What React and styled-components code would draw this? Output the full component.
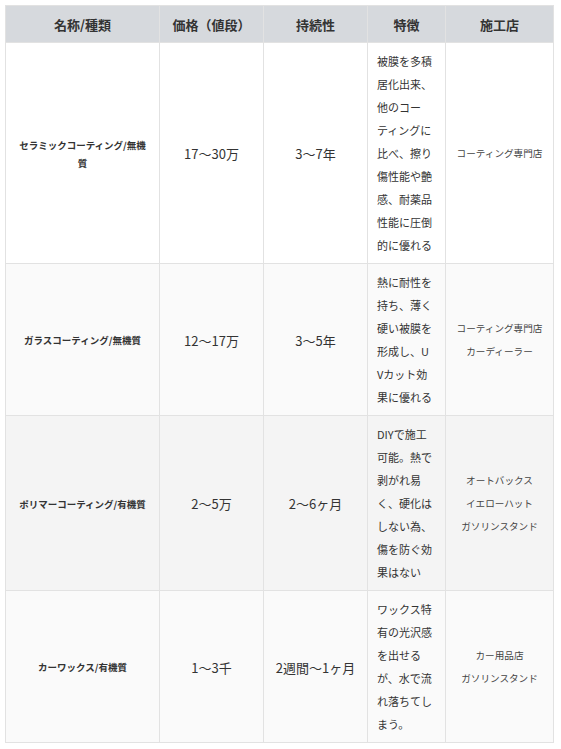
import styled, { createGlobalStyle } from "styled-components";

const GlobalStyle = createGlobalStyle`
  body {
    margin: 0;
    background: #ffffff;
    font-family: "Noto Sans CJK JP", "Noto Sans", sans-serif;
    color: #333333;
  }
`;

const Wrapper = styled.div`
  padding: 5px;
`;

const Table = styled.table`
  width: 548px;
  border-collapse: collapse;
  table-layout: fixed;
  border: 1px solid #e2e2e2;
`;

const Head = styled.th`
  background-color: #d6d9dd;
  border: 1px solid #e2e2e2;
  font-size: 13px;
  font-weight: bold;
  line-height: 23px;
  padding: 7px 8px 6px;
  text-align: center;
  color: #333333;
`;

const Row = styled.tr`
  background-color: ${(p) => p.$bg};
`;

const Cell = styled.td`
  border: 1px solid #e2e2e2;
  padding: 7px 10px 6px;
  vertical-align: middle;
  text-align: center;
  font-size: 13px;
  line-height: 23px;
  color: #333333;
`;

const NameCell = styled(Cell)`
  font-size: 9.5px;
  font-weight: bold;
  line-height: 18px;
  padding: 7px 11px 6px;
  line-break: strict;
`;

const FeatureCell = styled(Cell)`
  font-size: 11px;
  text-align: left;
  padding: 7px 9px 6px;
`;

const Line = styled.div`
  white-space: nowrap;
`;

const ShopCell = styled(Cell)`
  font-size: 9.6px;
  padding: 7px 6px 6px;
  color: #444444;
`;

const rows = [
  {
    name: "セラミックコーティング/無機質",
    price: "17〜30万",
    life: "3〜7年",
    feature: [
      "被膜を多積",
      "居化出来、",
      "他のコー",
      "ティングに",
      "比べ、擦り",
      "傷性能や艶",
      "感、耐薬品",
      "性能に圧倒",
      "的に優れる",
    ],
    shops: ["コーティング専門店"],
    bg: "#ffffff",
  },
  {
    name: "ガラスコーティング/無機質",
    price: "12〜17万",
    life: "3〜5年",
    feature: ["熱に耐性を", "持ち、薄く", "硬い被膜を", "形成し、U", "Vカット効", "果に優れる"],
    shops: ["コーティング専門店", "カーディーラー"],
    bg: "#fafafa",
  },
  {
    name: "ポリマーコーティング/有機質",
    price: "2〜5万",
    life: "2〜6ヶ月",
    feature: ["DIYで施工", "可能。熱で", "剥がれ易", "く、硬化は", "しない為、", "傷を防ぐ効", "果はない"],
    shops: ["オートバックス", "イエローハット", "ガソリンスタンド"],
    bg: "#f4f4f4",
  },
  {
    name: "カーワックス/有機質",
    price: "1〜3千",
    life: "2週間〜1ヶ月",
    feature: ["ワックス特", "有の光沢感", "を出せる", "が、水で流", "れ落ちてし", "まう。"],
    shops: ["カー用品店", "ガソリンスタンド"],
    bg: "#fafafa",
  },
];

export default function App() {
  return (
    <>
      <GlobalStyle />
      <Wrapper lang="ja">
        <Table>
          <colgroup>
            <col style={{ width: 154 }} />
            <col style={{ width: 104 }} />
            <col style={{ width: 104 }} />
            <col style={{ width: 78 }} />
            <col style={{ width: 108 }} />
          </colgroup>
          <thead>
            <tr>
              <Head>名称/種類</Head>
              <Head>価格（値段）</Head>
              <Head>持続性</Head>
              <Head>特徴</Head>
              <Head>施工店</Head>
            </tr>
          </thead>
          <tbody>
            {rows.map((r) => (
              <Row key={r.name} $bg={r.bg}>
                <NameCell>{r.name}</NameCell>
                <Cell>{r.price}</Cell>
                <Cell>{r.life}</Cell>
                <FeatureCell>
                  {r.feature.map((l, i) => (
                    <Line key={i}>{l}</Line>
                  ))}
                </FeatureCell>
                <ShopCell>
                  {r.shops.map((s, i) => (
                    <div key={i}>{s}</div>
                  ))}
                </ShopCell>
              </Row>
            ))}
          </tbody>
        </Table>
      </Wrapper>
    </>
  );
}
